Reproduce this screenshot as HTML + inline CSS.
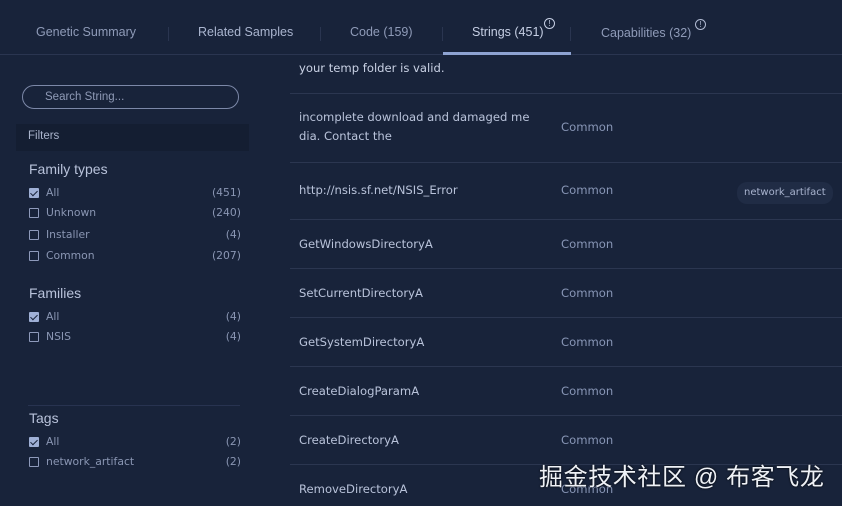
<!DOCTYPE html>
<html><head><meta charset="utf-8"><style>
*{margin:0;padding:0;box-sizing:border-box}
body{width:842px;height:506px;overflow:hidden;background:#18233a;font-family:"Liberation Sans","DejaVu Sans",sans-serif;position:relative;color:#aab4cc}
.a{position:absolute;white-space:nowrap}
.tab{font-size:12.5px;color:#8f9bb8;top:25px}
.sep{position:absolute;width:1px;height:14px;background:#2a3550;top:27px}
.line{position:absolute;height:1px;background:#2b3650;left:290px;right:0}
.s{font-family:"DejaVu Sans",sans-serif;font-size:11.6px;color:#b9c3da;left:299px}
.c{font-family:"DejaVu Sans",sans-serif;font-size:11.6px;color:#8896b6;left:561px}
.cb{position:absolute;width:10px;height:10px;border:1px solid #8e9abb;border-radius:1px;left:29px}
.cb.on{background:#9fb0d6;border-color:#9fb0d6}
.cb.on:after{content:"";position:absolute;left:2px;top:0px;width:3px;height:6px;border:solid #18233a;border-width:0 1.5px 1.5px 0;transform:rotate(45deg)}
.l{font-family:"DejaVu Sans",sans-serif;font-size:10.8px;color:#8a96b3;left:46px}
.n{font-family:"DejaVu Sans",sans-serif;font-size:10.8px;color:#8a96b3;right:601px}
.h{font-size:14px;color:#b8c2da;left:29px}
</style></head><body>
<div class="a tab" style="left:36px">Genetic Summary</div>
<div class="sep" style="left:168px"></div>
<div class="a tab" style="left:198px;color:#aab5cf">Related Samples</div>
<div class="sep" style="left:320px"></div>
<div class="a tab" style="left:350px">Code (159)</div>
<div class="sep" style="left:442px"></div>
<div class="a tab" style="left:472px;color:#c6cfe4">Strings (451)</div>
<div class="a" style="left:544px;top:18px;color:#c6cfe4;border:1px solid #c6cfe4;border-radius:50%;width:11px;height:11px;line-height:9px;text-align:center;font-size:8px">!</div>
<div class="sep" style="left:570px"></div>
<div class="a tab" style="left:601px;top:26px">Capabilities (32)</div>
<div class="a" style="left:695px;top:19px;color:#b0bad2;border:1px solid #b0bad2;border-radius:50%;width:11px;height:11px;line-height:9px;text-align:center;font-size:8px">!</div>
<div style="position:absolute;left:0;right:0;top:54px;height:1px;background:#2a3550"></div>
<div style="position:absolute;left:443px;width:128px;top:52px;height:3px;background:#8ea3d2"></div>

<div class="a" style="left:22px;top:85px;width:217px;height:24px;border:1px solid #7c88a8;border-radius:12px;font-size:11.5px;color:#8f9ab6;padding:5px 0 0 22px">Search String...</div>
<div class="a" style="left:16px;top:124px;width:233px;height:27px;background:#141e32;font-size:11.5px;color:#aab4cc;padding:6px 0 0 12px">Filters</div>

<div class="a h" style="top:161px">Family types</div>
<div class="cb on" style="top:188px"></div><div class="a l" style="top:186px">All</div><div class="a n" style="top:186px">(451)</div>
<div class="cb" style="top:208px"></div><div class="a l" style="top:206px">Unknown</div><div class="a n" style="top:206px">(240)</div>
<div class="cb" style="top:230px"></div><div class="a l" style="top:228px">Installer</div><div class="a n" style="top:228px">(4)</div>
<div class="cb" style="top:251px"></div><div class="a l" style="top:249px">Common</div><div class="a n" style="top:249px">(207)</div>
<div class="a h" style="top:285px">Families</div>
<div class="cb on" style="top:312px"></div><div class="a l" style="top:310px">All</div><div class="a n" style="top:310px">(4)</div>
<div class="cb" style="top:332px"></div><div class="a l" style="top:330px">NSIS</div><div class="a n" style="top:330px">(4)</div>
<div style="position:absolute;left:28px;width:212px;top:405px;height:1px;background:#283350"></div>
<div class="a h" style="top:410px">Tags</div>
<div class="cb on" style="top:437px"></div><div class="a l" style="top:435px">All</div><div class="a n" style="top:435px">(2)</div>
<div class="cb" style="top:457px"></div><div class="a l" style="top:455px">network_artifact</div><div class="a n" style="top:455px">(2)</div>

<div class="a s" style="top:61px;color:#c9d1e4">your temp folder is valid.</div>
<div class="line" style="top:93px"></div>
<div class="a s" style="top:110px">incomplete download and damaged me</div>
<div class="a s" style="top:129px">dia. Contact the</div>
<div class="a c" style="top:120px">Common</div>
<div class="line" style="top:162px"></div>
<div class="a s" style="top:183px">http://nsis.sf.net/NSIS_Error</div>
<div class="a c" style="top:183px">Common</div>
<div class="a" style="left:737px;top:182px;height:22px;padding:5px 7px;background:#202c45;border-radius:10px;font-family:'DejaVu Sans',sans-serif;font-size:10px;color:#a9b4cf">network_artifact</div>
<div class="line" style="top:219px"></div>
<div class="a s" style="top:237px">GetWindowsDirectoryA</div><div class="a c" style="top:237px">Common</div>
<div class="line" style="top:268px"></div>
<div class="a s" style="top:286px">SetCurrentDirectoryA</div><div class="a c" style="top:286px">Common</div>
<div class="line" style="top:317px"></div>
<div class="a s" style="top:335px">GetSystemDirectoryA</div><div class="a c" style="top:335px">Common</div>
<div class="line" style="top:366px"></div>
<div class="a s" style="top:384px">CreateDialogParamA</div><div class="a c" style="top:384px">Common</div>
<div class="line" style="top:415px"></div>
<div class="a s" style="top:433px">CreateDirectoryA</div><div class="a c" style="top:433px">Common</div>
<div class="line" style="top:464px"></div>
<div class="a s" style="top:482px">RemoveDirectoryA</div><div class="a c" style="top:482px">Common</div>

<div class="a" style="left:539px;top:457px;font-family:'Liberation Sans','Noto Sans CJK SC',sans-serif;font-size:24px;letter-spacing:0.6px;color:#eef1f6;text-shadow:0 0 2px #000">掘金技术社区 @ 布客飞龙</div>
</body></html>
